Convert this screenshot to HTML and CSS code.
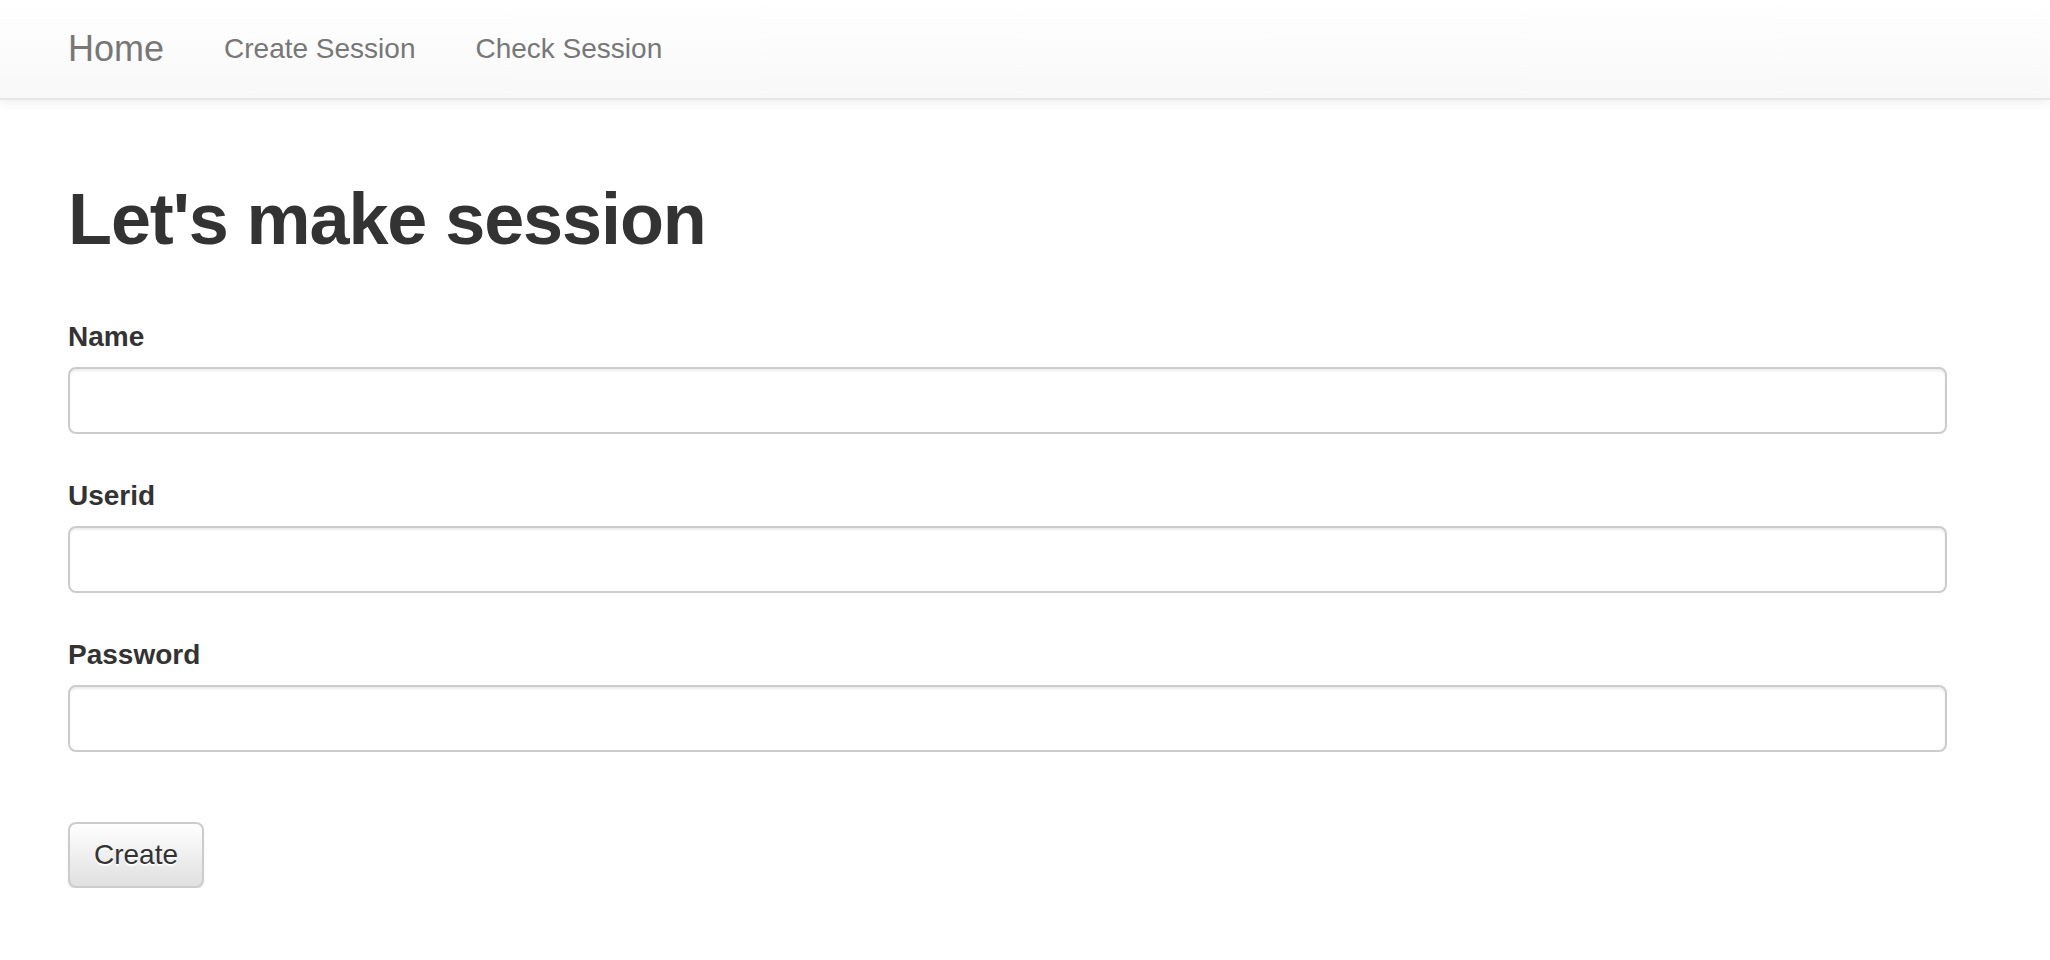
FILE: index.html
```html
<!DOCTYPE html>
<html lang="en">
<head>
<meta charset="utf-8">
<title>Let's make session</title>
<link rel="stylesheet" href="styles.css">
</head>
<body>
<nav class="navbar">
  <a class="brand" href="#">Home</a>
  <ul class="nav">
    <li><a href="#">Create Session</a></li>
    <li><a href="#">Check Session</a></li>
  </ul>
</nav>
<main class="container">
  <h1 class="title">Let's make session</h1>
  <form class="form">
    <div class="form-group">
      <label class="label" for="name">Name</label>
      <input class="input" id="name" type="text">
    </div>
    <div class="form-group">
      <label class="label" for="userid">Userid</label>
      <input class="input" id="userid" type="text">
    </div>
    <div class="form-group">
      <label class="label" for="password">Password</label>
      <input class="input" id="password" type="password">
    </div>
    <div class="actions">
      <button class="btn" type="button">Create</button>
    </div>
  </form>
</main>
</body>
</html>
```

FILE: styles.css
```css
html, body {
  margin: 0;
  padding: 0;
  background: #fff;
}
body {
  font-family: "Liberation Sans", Arial, Helvetica, sans-serif;
  color: #333;
}
.navbar {
  display: flex;
  align-items: center;
  height: 100px;
  padding-left: 38px;
  background-image: linear-gradient(to bottom, #ffffff 0%, #f8f8f8 100%);
  border-bottom: 2px solid #e6e6e6;
  box-shadow: inset 0 2px 0 rgba(255,255,255,.15), 0 2px 10px rgba(0,0,0,.075);
  box-sizing: border-box;
}
.brand {
  display: block;
  padding: 0 30px;
  font-size: 36px;
  line-height: 40px;
  color: #777;
  text-decoration: none;
}
.nav {
  display: flex;
  list-style: none;
  margin: 0;
  padding: 0;
}
.nav a {
  display: block;
  padding: 0 30px;
  font-size: 28px;
  line-height: 40px;
  color: #777;
  text-decoration: none;
}
.container {
  padding-left: 68px;
  width: 1879px;
}
.title {
  margin: 80px 0 58px;
  font-size: 72px;
  line-height: 79px;
  font-weight: bold;
  letter-spacing: -1.1px;
  color: #333;
}
.form-group {
  margin-bottom: 42px;
}
.label {
  display: block;
  font-size: 28px;
  line-height: 40px;
  font-weight: bold;
  margin-bottom: 10px;
}
.input {
  display: block;
  width: 100%;
  height: 67px;
  box-sizing: border-box;
  margin: 0;
  padding: 12px 24px;
  font: 28px "Liberation Sans", Arial, sans-serif;
  color: #555;
  background: #fff;
  border: 2px solid #cccccc;
  border-radius: 8px;
  box-shadow: inset 0 2px 2px rgba(0,0,0,.075);
  outline: none;
}
.actions {
  padding-top: 28px;
}
.btn {
  display: block;
  margin: 0;
  height: 66px;
  padding: 0 24px;
  font: 28px "Liberation Sans", Arial, sans-serif;
  color: #333;
  text-shadow: 0 2px 0 #fff;
  background-image: linear-gradient(to bottom, #ffffff 0%, #e0e0e0 100%);
  border: 2px solid #cccccc;
  border-radius: 8px;
  box-shadow: inset 0 2px 0 rgba(255,255,255,.15), 0 2px 2px rgba(0,0,0,.075);
  cursor: pointer;
}
```
